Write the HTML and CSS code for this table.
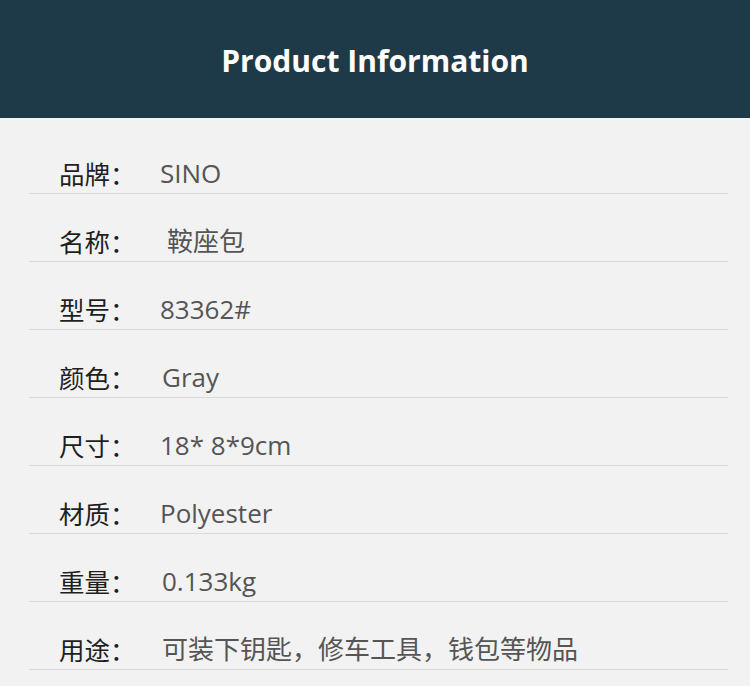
FILE: index.html
```html
<!DOCTYPE html>
<html lang="zh">
<head>
<meta charset="utf-8">
<title>Product Information</title>
<link rel="stylesheet" href="styles.css">
</head>
<body>
<header class="banner">
  <h1 class="banner-title">Product Information</h1>
</header>
<main class="spec">
  <div class="row"><span class="label">品牌：</span><span class="value">SINO</span></div>
  <div class="row"><span class="label">名称：</span><span class="value value-indent">鞍座包</span></div>
  <div class="row"><span class="label">型号：</span><span class="value">83362#</span></div>
  <div class="row"><span class="label">颜色：</span><span class="value value-nudge">Gray</span></div>
  <div class="row"><span class="label">尺寸：</span><span class="value">18* 8*9cm</span></div>
  <div class="row"><span class="label">材质：</span><span class="value">Polyester</span></div>
  <div class="row"><span class="label">重量：</span><span class="value value-nudge">0.133kg</span></div>
  <div class="row"><span class="label">用途：</span><span class="value value-nudge">可装下钥匙，修车工具，钱包等物品</span></div>
</main>
</body>
</html>
```
FILE: styles.css
```css
html, body {
  margin: 0;
  padding: 0;
}
body {
  background: #f2f2f2;
  font-family: "Open Sans", "Noto Sans CJK SC", sans-serif;
  width: 750px;
  height: 686px;
  overflow: hidden;
}
.banner {
  background: #1e3a49;
  height: 118px;
  display: flex;
  align-items: center;
  justify-content: center;
}
.banner-title {
  margin: 0;
  padding-top: 4px;
  color: #ffffff;
  font-family: "Open Sans", sans-serif;
  font-weight: 700;
  font-size: 30px;
  line-height: 36px;
}
.spec {
  padding: 8px 22px 0 29px;
  display: flex;
  flex-direction: column;
}
.row {
  display: flex;
  align-items: center;
  height: 28px;
  padding: 34px 0 5px 30px;
  border-bottom: 1px solid #d9d9d9;
}
.label {
  width: 101px;
  flex: none;
  color: #1f1f1f;
  font-family: "Noto Sans CJK SC", sans-serif;
  font-size: 25.5px;
  line-height: 28px;
  margin-top: -2px;
}
.value {
  color: #555555;
  font-family: "Open Sans", "Noto Sans CJK SC", sans-serif;
  font-size: 26px;
  line-height: 28px;
  margin-top: -2px;
}
.value-indent {
  padding-left: 7px;
}
.value-nudge {
  padding-left: 2px;
}
```
